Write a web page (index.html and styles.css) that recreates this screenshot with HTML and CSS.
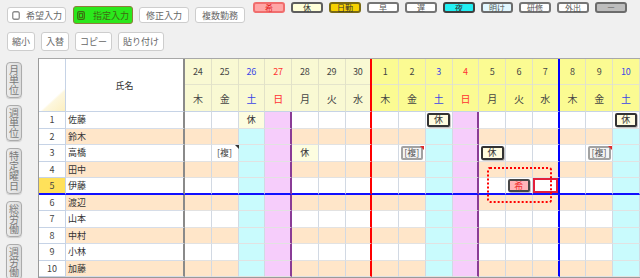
FILE: index.html
```html
<!DOCTYPE html>
<html lang="ja">
<head>
<meta charset="utf-8">
<title>勤務表</title>
<link rel="stylesheet" href="styles.css">
</head>
<body>
<header class="top">
  <div class="tools">
    <div class="trow">
      <button class="btn ico"><svg width="8" height="9" viewBox="0 0 8 9"><rect x="0.75" y="0.75" width="6.5" height="7.5" rx="1.6" fill="#fff" stroke="#8a8a8a" stroke-width="1.3"/></svg>希望入力</button>
      <button class="btn ico on"><svg width="8" height="9" viewBox="0 0 8 9"><rect x="0.7" y="0.7" width="6.6" height="7.6" rx="1.4" fill="none" stroke="#3d6a12" stroke-width="1.2"/><rect x="2.4" y="2.6" width="3.2" height="3.8" fill="none" stroke="#3d6a12" stroke-width="1"/></svg>指定入力</button>
      <button class="btn">修正入力</button>
      <button class="btn">複数勤務</button>
    </div>
    <div class="trow r2">
      <button class="btn">縮小</button>
      <button class="btn">入替</button>
      <button class="btn">コピー</button>
      <button class="btn">貼り付け</button>
    </div>
  </div>
  <ul class="legend">
    <li class="k k-ki">希</li>
    <li class="k k-kyu">休</li>
    <li class="k k-nik">日勤</li>
    <li class="k">早</li>
    <li class="k">遅</li>
    <li class="k k-ya">夜</li>
    <li class="k k-ak">明け</li>
    <li class="k">研修</li>
    <li class="k">外出</li>
    <li class="k k-no">ー</li>
  </ul>
</header>
<main class="main">
  <nav class="side">
    <button class="vbtn">月単位</button>
    <button class="vbtn">週単位</button>
    <button class="vbtn">特定曜日</button>
    <button class="vbtn">総労働</button>
    <button class="vbtn">週労働</button>
  </nav>
  <section class="sheet">
    <div class="hrow">
      <div class="corner"></div>
      <div class="namehd">氏名</div>
      <div><span class="dt">24</span><span class="wd">木</span></div>
      <div><span class="dt">25</span><span class="wd">金</span></div>
      <div><span class="dt">26</span><span class="wd">土</span></div>
      <div><span class="dt">27</span><span class="wd">日</span></div>
      <div><span class="dt">28</span><span class="wd">月</span></div>
      <div><span class="dt">29</span><span class="wd">火</span></div>
      <div><span class="dt">30</span><span class="wd">水</span></div>
      <div><span class="dt">1</span><span class="wd">木</span></div>
      <div><span class="dt">2</span><span class="wd">金</span></div>
      <div><span class="dt">3</span><span class="wd">土</span></div>
      <div><span class="dt">4</span><span class="wd">日</span></div>
      <div><span class="dt">5</span><span class="wd">月</span></div>
      <div><span class="dt">6</span><span class="wd">火</span></div>
      <div><span class="dt">7</span><span class="wd">水</span></div>
      <div><span class="dt">8</span><span class="wd">木</span></div>
      <div><span class="dt">9</span><span class="wd">金</span></div>
      <div><span class="dt">10</span><span class="wd">土</span></div>
    </div>
    <div class="brow">
      <div>1</div><div>佐藤</div>
      <div></div><div></div><div class="req">休</div><div></div><div></div><div></div><div></div>
      <div></div><div></div><div class="w"><span class="chip">休</span></div><div></div><div></div><div></div><div></div>
      <div></div><div></div><div class="w"><span class="chip">休</span></div>
    </div>
    <div class="brow alt">
      <div>2</div><div>鈴木</div>
      <div></div><div></div><div></div><div></div><div></div><div></div><div></div>
      <div></div><div></div><div></div><div></div><div></div><div></div><div></div>
      <div></div><div></div><div></div>
    </div>
    <div class="brow">
      <div>3</div><div>高橋</div>
      <div></div><div class="mk">[複]</div><div></div><div></div><div class="req">休</div><div></div><div></div>
      <div></div><div><span class="chip fk">[複]</span></div><div></div><div></div><div><span class="chip">休</span></div><div></div><div></div>
      <div></div><div><span class="chip fk">[複]</span></div><div></div>
    </div>
    <div class="brow alt">
      <div>4</div><div>田中</div>
      <div></div><div></div><div></div><div></div><div></div><div></div><div></div>
      <div></div><div></div><div></div><div></div><div></div><div></div><div></div>
      <div></div><div></div><div></div>
    </div>
    <div class="brow cur">
      <div>5</div><div>伊藤</div>
      <div></div><div></div><div></div><div></div><div></div><div></div><div></div>
      <div></div><div></div><div></div><div></div><div></div><div><span class="chip ki">希</span></div><div class="sel"></div>
      <div></div><div></div><div></div>
    </div>
    <div class="brow alt">
      <div>6</div><div>渡辺</div>
      <div></div><div></div><div></div><div></div><div></div><div></div><div></div>
      <div></div><div></div><div></div><div></div><div></div><div></div><div></div>
      <div></div><div></div><div></div>
    </div>
    <div class="brow">
      <div>7</div><div>山本</div>
      <div></div><div></div><div></div><div></div><div></div><div></div><div></div>
      <div></div><div></div><div></div><div></div><div></div><div></div><div></div>
      <div></div><div></div><div></div>
    </div>
    <div class="brow alt">
      <div>8</div><div>中村</div>
      <div></div><div></div><div></div><div></div><div></div><div></div><div></div>
      <div></div><div></div><div></div><div></div><div></div><div></div><div></div>
      <div></div><div></div><div></div>
    </div>
    <div class="brow">
      <div>9</div><div>小林</div>
      <div></div><div></div><div></div><div></div><div></div><div></div><div></div>
      <div></div><div></div><div></div><div></div><div></div><div></div><div></div>
      <div></div><div></div><div></div>
    </div>
    <div class="brow alt">
      <div>10</div><div>加藤</div>
      <div></div><div></div><div></div><div></div><div></div><div></div><div></div>
      <div></div><div></div><div></div><div></div><div></div><div></div><div></div>
      <div></div><div></div><div></div>
    </div>
    <div class="drag"></div>
  </section>
</main>
</body>
</html>
```
FILE: styles.css
```css
* { box-sizing: border-box; }
html, body { margin: 0; padding: 0; }
body {
  width: 640px;
  height: 278px;
  overflow: hidden;
  background: #f0f0f0;
  font-family: "Noto Sans CJK JP", "Noto Sans", sans-serif;
  color: #444;
}
button { font-family: inherit; margin: 0; }

/* ---------- top area ---------- */
.top {
  height: 58px;
  display: flex;
  align-items: flex-start;
}
.tools { padding: 6px 0 0 7px; }
.trow {
  display: flex;
  align-items: center;
  gap: 6px;
  height: 18px;
}
.trow.r2 { margin-top: 8px; height: 19px; }
.btn {
  display: inline-flex;
  align-items: center;
  height: 16px;
  padding: 0 6px;
  border: 1px solid #cdcdcd;
  border-radius: 3px;
  background: #fff;
  color: #666;
  font-size: 9px;
  line-height: 1;
  white-space: nowrap;
}
.r2 .btn { height: 19px; padding: 0 4px; }
.btn.ico { gap: 6px; padding: 0 3px 0 4px; }
.btn.on {
  height: 18px;
  gap: 8px;
  padding: 0 3px 0 3px;
  margin-left: 1px;
  background: #2be81c;
  border-color: #8e7c3c;
  color: #3d6a12;
}
.btn svg { display: block; flex: none; }

.legend {
  list-style: none;
  margin: 2px 13px 0 auto;
  padding: 0;
  display: flex;
  gap: 6px;
}
.k {
  width: 32px;
  height: 11px;
  border: 2px solid #757575;
  border-radius: 3px;
  background: #fff;
  color: #555;
  font-size: 8px;
  line-height: 7px;
  text-align: center;
}
.k-ki { background: #ffa6a6; border-color: #f06e6e; color: #e41e1e; }
.k-kyu { background: #ffffd9; border-color: #5e5e5e; color: #333; }
.k-nik { background: #f7d100; border-color: #7a6a14; color: #333; }
.k-ya { background: #22eff3; border-color: #404040; color: #333; }
.k-ak { background: #e2f7ff; border-color: #6c6c6c; }
.k-no { background: #bdbdbd; border-color: #6c6c6c; color: #777; }

/* ---------- main ---------- */
.main {
  display: flex;
  height: 220px;
}
.side {
  width: 38px;
  flex: none;
  display: flex;
  flex-direction: column;
  align-items: flex-start;
  gap: 7px;
  padding: 4px 0 0 6px;
}
.vbtn {
  display: block;
  width: 16px;
  padding: 2px 0;
  border: 1px solid #ababab;
  border-radius: 4px;
  background: linear-gradient(to right, #ececec, #dcdcdc);
  box-shadow: 0 1px 1px rgba(0,0,0,0.15);
  color: #7a7a7a;
  font-size: 10px;
  line-height: 10px;
  text-align: center;
  word-break: break-all;
  white-space: normal;
}

.sheet {
  flex: 1;
  position: relative;
  overflow: hidden;
  background: #fff;
  border-top: 1px solid #a8a8a8;
  border-left: 1px solid #9a9a9a;
  border-bottom: 1px solid #9a9a9a;
}
.hrow, .brow {
  display: grid;
  grid-template-columns: 27px 119px repeat(17, 26.75px);
}
.hrow { height: 53px; }
.brow { height: 16.5px; }

/* header */
.hrow > div {
  display: flex;
  flex-direction: column;
  border-right: 1px solid #e2e2c8;
  border-bottom: 1px solid #c6d3e6;
  background: #f9f9d3;
}
.hrow > :nth-child(n+10) { background: #fbfb92; }
.hrow .corner {
  background: #fff linear-gradient(to top left, #fcefc0 0%, #fdf7de 44%, rgba(255,255,255,0) 50%) right bottom / 25px 23px no-repeat;
  border-right: 1px solid #c6d3e6;
}
.hrow .namehd {
  background: #fff;
  justify-content: center;
  align-items: center;
  border-right: 2px solid #8a8a8a;
  font-size: 9px;
  color: #333;
}
.dt, .wd {
  display: flex;
  align-items: center;
  justify-content: center;
  color: #444;
}
.dt { height: 26px; border-bottom: 1px solid #e4e4cc; font-size: 9px; }
.wd { flex: 1; font-size: 10px; }
.hrow > :nth-child(5) span, .hrow > :nth-child(12) span, .hrow > :nth-child(19) span { color: #3b46e6; }
.hrow > :nth-child(6) span, .hrow > :nth-child(13) span { color: #ff3333; }
.hrow > :nth-child(9) { border-right: 2px solid #ff0000; }
.hrow > :nth-child(16) { border-right: 2px solid #0000ff; }

/* body */
.brow > div {
  display: flex;
  align-items: center;
  justify-content: center;
  border-right: 1px solid #d2d9e3;
  border-bottom: 1px solid #e2e2e2;
  font-size: 9px;
  color: #333;
  position: relative;
}
.brow.alt > div { background: #ffe6c9; }
.brow > :nth-child(1) {
  background: #fff !important;
  border-right: 1px solid #c6d3e6;
  border-bottom-color: #c6d3e6;
  color: #444;
}
.brow > :nth-child(2) {
  justify-content: flex-start;
  padding-left: 2px;
  border-right: 2px solid #8a8a8a;
  border-bottom-color: #d6dde8;
}
.brow > :nth-child(5), .brow > :nth-child(12), .brow > :nth-child(19) { background: #c9fbfd; }
.brow.alt > :nth-child(5), .brow.alt > :nth-child(12), .brow.alt > :nth-child(19) { background: #c9fbfd; }
.brow > :nth-child(6), .brow > :nth-child(13),
.brow.alt > :nth-child(6), .brow.alt > :nth-child(13) {
  background: #f6cdfb;
  border-right: 2px solid #8a3c96;
}
.brow > :nth-child(9) { border-right: 2px solid #ff0000; }
.brow > :nth-child(16) { border-right: 2px solid #0000ff; }
.brow.cur > div { border-bottom: 2px solid #1010ff; }
.brow.cur > :nth-child(1) { background: #ffe15a !important; }

.brow > .req { background: #fdfde0; }
.brow > .w { background: #fff; }
.brow > .mk { color: #444; }
.brow > .mk::after {
  content: "";
  position: absolute;
  top: 0;
  right: -1px;
  border-top: 4px solid #333;
  border-left: 4px solid transparent;
}
.brow > .sel { box-shadow: inset 0 0 0 2px #e3203c; }

.chip {
  display: flex;
  align-items: center;
  justify-content: center;
  width: calc(100% - 3px);
  height: calc(100% - 2px);
  border: 2px solid #333;
  border-radius: 2px;
  background: #fffce0;
  box-shadow: 1px 1px 0 #c4c4c4;
  color: #333;
  font-size: 9px;
  line-height: 1;
  position: relative;
}
.chip.fk {
  background: #f4f4f4;
  border-color: #a2a2a2;
  color: #555;
  box-shadow: none;
}
.chip.fk::after {
  content: "";
  position: absolute;
  top: -2px;
  right: -3px;
  border-top: 4px solid #e02a2a;
  border-left: 4px solid transparent;
}
.chip.ki {
  background: #ffb3b8;
  border-color: #474747;
  color: #f03030;
}

.drag {
  position: absolute;
  left: 448px;
  top: 108px;
  width: 65px;
  height: 36px;
  border: 2px dotted #ff0000;
  border-radius: 3px;
  pointer-events: none;
}
```
